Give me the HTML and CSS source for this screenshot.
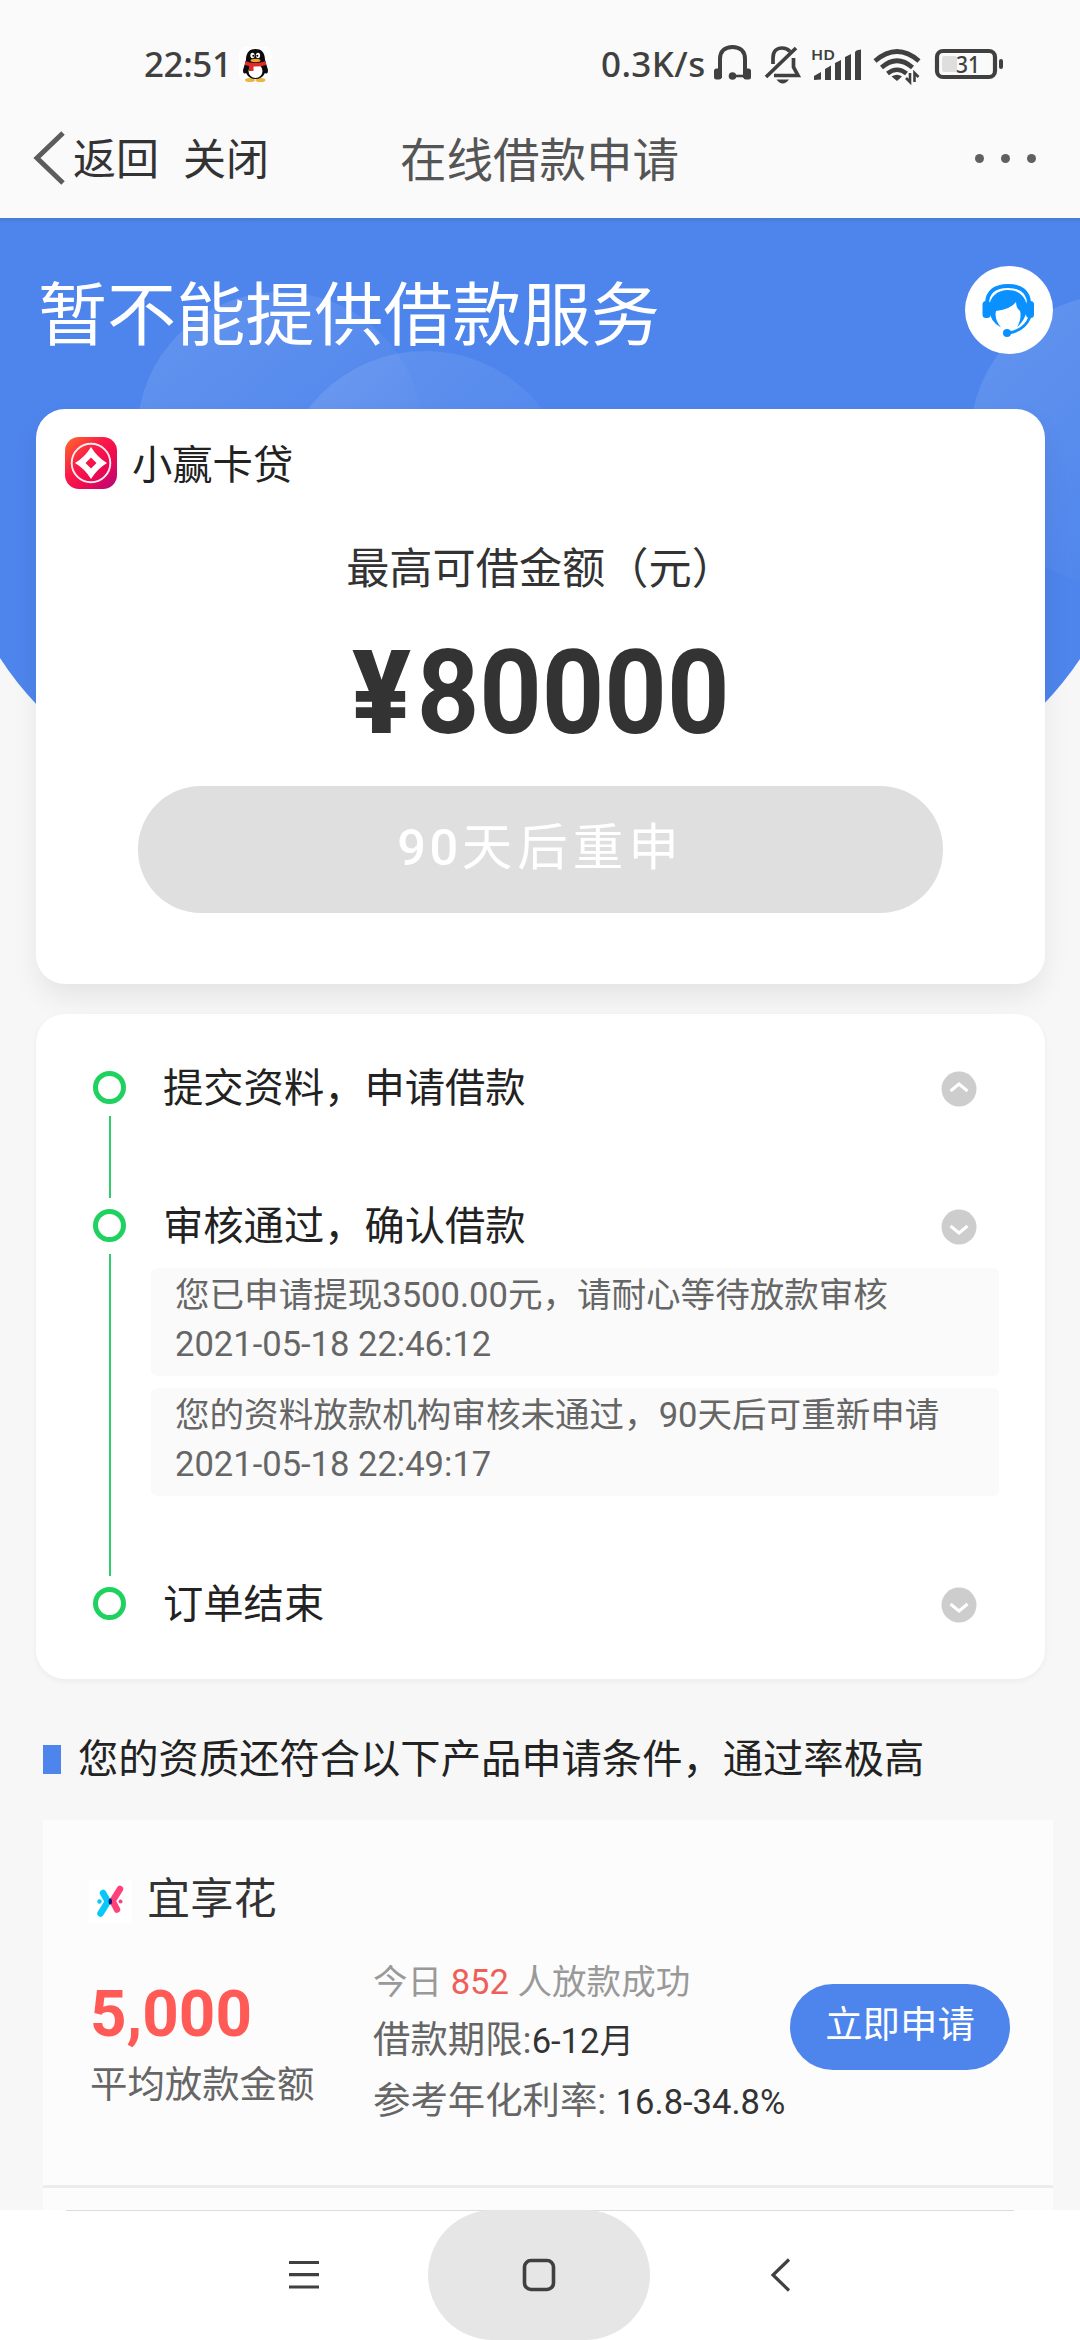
FILE: index.html
```html
<!DOCTYPE html>
<html lang="zh-CN">
<head>
<meta charset="utf-8">
<title>在线借款申请</title>
<link rel="stylesheet" href="styles.css">
</head>
<body>
<div class="screen">
  <header class="top">
    <div class="status">
      <span class="clock">22:51</span>
      <svg class="penguin" width="34" height="35" viewBox="239 47 34 35">
        <rect x="239" y="47" width="33" height="34" rx="7" fill="#fff"/>
        <ellipse cx="250" cy="80" rx="5" ry="2" fill="#e9b640"/><ellipse cx="260.500" cy="80" rx="5" ry="2" fill="#e9b640"/>
        <path d="M246 60C246 52 250 49 255.500 49S265 52 265 60L268 70Q268 75 265 73Q262 79 255.500 79T246 73Q243 75 243 70Z" fill="#0b0b0b"/>
        <ellipse cx="255.500" cy="71" rx="7" ry="7" fill="#fff"/>
        <path d="M245 61Q255 65 266 61L266 65Q260 67 253.500 66.500V71H249V66L245 65Z" fill="#e02b2b"/>
        <ellipse cx="252.500" cy="55.500" rx="2.100" ry="2.800" fill="#fff"/><ellipse cx="258" cy="55.500" rx="2.100" ry="2.800" fill="#fff"/>
        <circle cx="253.300" cy="55.700" r="1" fill="#000"/><circle cx="257.300" cy="55.700" r="1" fill="#000"/>
        <ellipse cx="255.500" cy="60.500" rx="5" ry="1.700" fill="#f0a52a"/>
      </svg>
      <span class="spacer"></span>
      <span class="speed">0.3K/s</span>
      <svg width="44" height="44" viewBox="708 42 44 44" fill="none" stroke="#404040">
        <path d="M718 78V59C718 51 723 47 730.500 47S743 51 743 59V78" stroke-width="4"/>
        <rect x="712" y="68.500" width="7.500" height="11" rx="2.500" fill="#404040" stroke="none"/>
        <rect x="741.500" y="68.500" width="7.500" height="11" rx="2.500" fill="#404040" stroke="none"/>
        <circle cx="730.500" cy="76" r="3.800" fill="#404040" stroke="none"/>
        <path d="M731 76H743" stroke-width="2.600"/>
      </svg>
      <svg width="40" height="44" viewBox="763 42 40 44" fill="none" stroke="#404040" stroke-width="3.700">
        <path d="M773 64V58C773 51 777 48 782 48Q787 48 790 51.500"/>
        <path d="M793.500 58V67L798 75.500H774"/>
        <path d="M766 77L796 48"/>
        <path d="M776.500 79.500H789Q786 83.500 782.700 83.500T776.500 79.500" fill="#404040" stroke="none"/>
      </svg>
      <svg width="54" height="44" viewBox="810 42 54 44">
        <text x="811" y="60" class="hd" textLength="24" lengthAdjust="spacingAndGlyphs">HD</text>
        <path d="M814 80V76L821 72V79.500ZM825 80V69L831 65.500V80ZM835 80V63L841 60V80ZM845 80V57L851 54V80ZM855 80V52.500Q855 50 861 49.500V80Z" fill="#404040"/>
      </svg>
      <svg class="wifi" width="50" height="44" viewBox="872 42 50 44" fill="none" stroke="#404040" stroke-width="4.600">
        <path d="M875 61Q897 42 919 61"/>
        <path d="M881.500 67.500Q897 54 912.500 67.500"/>
        <path d="M887.500 73.500Q897 66 906.500 73.500"/>
        <path d="M891.500 76.500Q897 73 902 76.500L897 81Z" fill="#404040" stroke="none"/>
        <path d="M910 73V82L906 78M914.500 82V73L918.500 77" stroke-width="2.600"/>
      </svg>
      <svg width="72" height="44" viewBox="934 42 72 44">
        <rect x="937" y="51" width="58" height="26" rx="6" fill="none" stroke="#404040" stroke-width="4.200"/>
        <rect x="942" y="56" width="15" height="16" rx="2" fill="#dedede"/>
        <rect x="999" y="59" width="4" height="10" rx="2" fill="#404040"/>
        <text x="956" y="72.500" class="level" textLength="24" lengthAdjust="spacingAndGlyphs">31</text>
      </svg>
    </div>
    <nav class="navbar">
      <div class="nav-left">
        <svg width="34" height="54" viewBox="0 0 34 54" fill="none" stroke="#5c5c5c" stroke-width="5"><path d="M30 2L4 27L30 52"/></svg>
        <span class="back">返回</span><span>关闭</span>
      </div>
      <h1 class="nav-title">在线借款申请</h1>
      <div class="more"><i></i><i></i><i></i></div>
    </nav>
  </header>

  <main class="content">
    <svg class="hero-bg" width="1080" height="500" viewBox="0 218 1080 500">
      <defs>
        <linearGradient id="orb" x1="0.200" y1="0" x2="0.750" y2="0.600"><stop offset="0" stop-color="#fff" stop-opacity=".11"/><stop offset="1" stop-color="#fff" stop-opacity=".02"/></linearGradient>
        <linearGradient id="edge" x1="0" y1="0" x2="0" y2="1"><stop offset="0" stop-color="#467ad6"/><stop offset="1" stop-color="#4e85ec"/></linearGradient>
      </defs>
      <path d="M0 218H1080V659Q1064 683 1042 706H38Q16 683 0 658Z" fill="#4e85ec"/>
      <circle cx="280" cy="435" r="143" fill="url(#orb)"/>
      <circle cx="425" cy="498" r="147" fill="url(#orb)"/>
      <circle cx="1115" cy="440" r="145" fill="url(#orb)"/>
      <rect y="218" width="1080" height="5" fill="url(#edge)"/>
    </svg>

    <div class="hero-head">
      <h2>暂不能提供借款服务</h2>
      <span class="service">
        <svg width="54" height="56" viewBox="983 282 54 56">
          <path d="M988 304C988 291 997 286 1009 286S1030 291 1030 304" fill="none" stroke="#0a91ff" stroke-width="4"/>
          <rect x="983.500" y="301" width="8" height="17" rx="3.500" fill="#0a91ff"/>
          <rect x="1027" y="301" width="8" height="17" rx="3.500" fill="#0a91ff"/>
          <path d="M990 309C990 296 999 290 1009 290S1028 296 1028 309Q1027 319 1018 327.500Q1023 318 1021 311Q1017 308 1017 302Q1012 309 997 311Q995 319 1002 327.500Q991 322 990 309" fill="#0a91ff"/>
          <path d="M1031 317Q1025 331 1009 333" fill="none" stroke="#0a91ff" stroke-width="2.800"/>
          <circle cx="1008" cy="333" r="4" fill="#0a91ff"/>
        </svg>
      </span>
    </div>

    <section class="card loan">
      <div class="brand">
        <svg width="52" height="52" viewBox="0 0 52 52">
          <defs><linearGradient id="logo" x1="0" y1="0" x2="1" y2="1"><stop offset="0" stop-color="#fd6e2a"/><stop offset=".4" stop-color="#fb1a48"/><stop offset=".65" stop-color="#ee0a50"/><stop offset="1" stop-color="#b2087c"/></linearGradient></defs>
          <rect width="52" height="52" rx="14" fill="url(#logo)"/>
          <circle cx="26" cy="26" r="19.300" fill="none" stroke="#fff" stroke-opacity=".92" stroke-width="1.900"/>
          <path d="M26 10Q29 15 33 19Q37 23 42 26Q37 29 33 33Q29 37 26 42Q23 37 19 33Q15 29 10 26Q15 23 19 19Q23 15 26 10ZM26 20.500L20.500 26L26 31.500L31.500 26Z" fill="#fff" fill-rule="evenodd"/>
        </svg>
        <span>小赢卡贷</span>
      </div>
      <p class="limit-label">最高可借金额（元）</p>
      <p class="limit"><span><b class="yen">¥</b>80000</span></p>
      <button class="retry"><b>90</b>天后重申</button>
    </section>

    <section class="card steps">
      <div class="step">
        <div class="rail"><i class="dot"></i><i class="line"></i></div>
        <div class="step-body"><div class="step-head"><span>提交资料，申请借款</span>
          <svg class="chev" viewBox="0 0 36 36"><circle cx="18" cy="18" r="17.500"/><path d="M9.500 20L18 13L26.500 20"/></svg></div></div>
      </div>
      <div class="step step-two">
        <div class="rail"><i class="dot"></i><i class="line"></i></div>
        <div class="step-body"><div class="step-head"><span>审核通过，确认借款</span>
          <svg class="chev" viewBox="0 0 36 36"><circle cx="18" cy="18" r="17.500"/><path d="M9.500 17L18 24L26.500 17"/></svg></div>
          <div class="note"><p>您已申请提现3500.00元，请耐心等待放款审核</p><p>2021-05-18 22:46:12</p></div>
          <div class="note"><p>您的资料放款机构审核未通过，90天后可重新申请</p><p>2021-05-18 22:49:17</p></div>
        </div>
      </div>
      <div class="step step-end">
        <div class="rail"><i class="dot"></i></div>
        <div class="step-body"><div class="step-head"><span>订单结束</span>
          <svg class="chev" viewBox="0 0 36 36"><circle cx="18" cy="18" r="17.500"/><path d="M9.500 17L18 24L26.500 17"/></svg></div></div>
      </div>
    </section>

    <div class="section-title"><i></i><span>您的资质还符合以下产品申请条件，通过率极高</span></div>

    <section class="products">
      <article class="product">
        <div class="product-name">
          <svg width="43" height="43" viewBox="0 0 43 43">
            <rect width="43" height="43" fill="#fff"/>
            <path d="M14 13L19 21.500L11.500 33.500" fill="none" stroke="#08c8fb" stroke-width="6.500" stroke-linecap="round" stroke-linejoin="round"/>
            <path d="M31 9L23.500 21L28 29.500" fill="none" stroke="#ff4179" stroke-width="6.500" stroke-linecap="round" stroke-linejoin="round"/>
            <ellipse cx="21.300" cy="21.500" rx="1.700" ry="3" fill="#1b1473"/>
            <circle cx="10.500" cy="21.500" r="2.200" fill="#08c8fb"/><circle cx="31.500" cy="21.500" r="2" fill="#ff4179"/>
          </svg>
          <span>宜享花</span>
        </div>
        <div class="product-row">
          <div class="amount"><p class="sum"><span>5,000</span></p><p class="sum-label">平均放款金额</p></div>
          <div class="facts">
            <p class="today">今日 <em>852</em> 人放款成功</p>
            <p class="term">借款期限:<b>6-12月</b></p>
            <p class="rate">参考年化利率: <b>16.8-34.8%</b></p>
          </div>
          <button class="apply">立即申请</button>
        </div>
      </article>
    </section>
  </main>

  <footer class="sysnav">
    <svg width="34" height="34" viewBox="0 0 34 34" stroke="#404040" stroke-width="3.200"><path d="M2 4.500H32M2 16.700H32M2 29H32"/></svg>
    <span class="home"><svg width="34" height="34" viewBox="0 0 34 34" fill="none" stroke="#404040" stroke-width="3.600"><rect x="2.500" y="2.500" width="29" height="29" rx="6.500"/></svg></span>
    <svg width="34" height="34" viewBox="0 0 34 34" fill="none" stroke="#404040" stroke-width="3.200"><path d="M25 1.500L9 17L25 32.500"/></svg>
  </footer>
</div>
</body>
</html>
```
FILE: styles.css
```css
* { box-sizing: border-box; margin: 0; padding: 0; }
body { width: 1080px; height: 2340px; overflow: hidden; background: #f7f7f7; font-family: Roboto, "Noto Sans CJK SC", sans-serif; color: #222; }
svg { display: block; flex: none; }
button { border: 0; font-family: inherit; color: #fff; display: block; }
h1, h2 { font-weight: 400; }
p, span { white-space: nowrap; }
.screen { width: 1080px; height: 2340px; display: flex; flex-direction: column; overflow: hidden; }

.top { flex: none; height: 218px; background: #fafafa; display: flex; flex-direction: column; }
.status { height: 98px; padding: 42px 74px 12px 144px; display: flex; align-items: center; color: #404040; font: 500 35px/44px "Noto Sans", sans-serif; }
.clock { width: 95px; letter-spacing: -.4px; }
.speed { width: 109px; letter-spacing: .4px; }
.spacer { flex: 1; }
.status svg + svg { margin-left: 9px; }
.status svg:nth-of-type(3) { margin-left: 9px; }
.status svg:nth-of-type(4) { margin-left: 7px; }
.status svg.wifi { margin-left: 8px; }
.status svg:last-child { margin-left: 12px; }
.hd { font: 600 15px "Noto Sans", sans-serif; fill: #404040; }
.level { font: 500 23px "Noto Sans", sans-serif; fill: #404040; }
.navbar { height: 120px; padding: 0 44px 0 33px; display: grid; grid-template-columns: 367px 1fr auto; align-items: center; }
.nav-left { display: flex; align-items: center; font-size: 43px; color: #333; line-height: 60px; }
.nav-left span { padding-top: 4px; }
.nav-left .back { margin: 0 24px 0 6px; }
.nav-title { font-size: 46.5px; line-height: 60px; padding-top: 5px; color: #555; }
.more { display: flex; justify-content: flex-end; gap: 17px; }
.more i { width: 9px; height: 9px; border-radius: 50%; background: #606060; }

.content { flex: 1; min-height: 0; overflow: hidden; position: relative; }
.hero-bg { position: absolute; left: 0; top: 0; z-index: -1; }
.hero-head { height: 191px; padding: 48px 27px 0 38px; display: flex; justify-content: space-between; align-items: flex-start; }
.hero-head h2 { font-size: 69.1px; line-height: 98px; padding-top: 2px; color: #fff; }
.service { width: 88px; height: 88px; border-radius: 50%; background: #fff; display: flex; align-items: center; justify-content: center; }

.card { margin: 0 35px 0 36px; background: #fff; border-radius: 29px; }
.loan { height: 575px; padding-top: 28px; box-shadow: 0 14px 30px -4px rgba(0,0,0,.09); }
.brand { display: flex; align-items: center; gap: 15px; height: 52px; padding-left: 29px; font-size: 40.3px; line-height: 52px; }
.brand span { padding-top: 5px; }
.limit-label { margin-top: 51px; text-align: center; font-size: 43.2px; line-height: 60px; color: #333; }
.limit { margin-top: 19px; text-align: center; font-size: 116px; line-height: 148px; font-weight: 700; color: #333; }
.limit span { display: inline-block; transform: scaleX(.94); }
.yen { margin-right: 6px; }
.retry { width: 805px; height: 127px; margin: 19px auto 0; border-radius: 63px; background: #dfdfdf; font-size: 50.5px; line-height: 124px; padding-bottom: 3px; letter-spacing: 5px; }
.retry b { font-weight: 500; letter-spacing: 3.5px; }

.steps { margin-top: 30px; height: 665px; padding: 45px 46px 0 55px; box-shadow: 0 2px 6px rgba(0,0,0,.05); }
.step { display: flex; height: 138px; }
.step-two { height: 378px; }
.step-end { height: 60px; }
.rail { width: 37px; padding-top: 12px; margin-bottom: -1px; display: flex; flex-direction: column; align-items: center; gap: 12px; }
.dot { flex: none; width: 33px; height: 33px; border: 5.5px solid #1fd15f; border-radius: 50%; }
.line { flex: 1; width: 2px; background: #2ecc6b; }
.step-body { flex: 1; padding-left: 23px; }
.step-head { height: 60px; padding: 0 22px 0 12px; display: flex; justify-content: space-between; align-items: center; font-size: 40.3px; line-height: 60px; }
.chev { width: 36px; height: 36px; fill: #cdcdcd; }
.chev path { fill: none; stroke: #fff; stroke-width: 3; }
.note { height: 108px; margin-top: 12px; padding: 3px 24px 0; border-radius: 6px; background: #fafafa; color: #666; font-size: 34.56px; line-height: 48.5px; }
.step-head + .note { margin-top: 11px; }

.section-title { display: flex; align-items: center; gap: 17px; height: 141px; padding: 20px 0 0 43px; font-size: 40.3px; line-height: 60px; }
.section-title i { width: 18px; height: 29px; background: #4e85ec; }
.section-title span { height: 60px; }
.products { width: 1010px; height: 400px; margin-left: 43px; background: #fcfcfc; }
.product { height: 368px; padding: 60px 43px 0 46px; border-bottom: 3px solid #ececec; }
.product-name { display: flex; align-items: center; gap: 15px; height: 43px; font-size: 43.2px; line-height: 43px; color: #333; }
.product-name span { padding-bottom: 4px; }
.product-row { display: flex; margin-top: 28px; }
.amount { width: 284px; padding: 25px 0 0 1px; }
.sum { height: 76px; font-size: 65.5px; line-height: 76px; font-weight: 700; color: #ff5a55; }
.sum span { display: inline-block; transform: scaleX(.973); transform-origin: left; }
.sum-label { margin-top: 8px; font-size: 37.4px; line-height: 50px; color: #666; }
.facts { width: 417px; padding-top: 3px; }
.today { font-size: 34.56px; line-height: 56px; color: #999; }
.today em { font-style: normal; color: #ef5f5a; }
.term, .rate { font-size: 37.4px; line-height: 60px; color: #666; }
.term b, .rate b { font-size: 34.56px; font-weight: 400; color: #333; }
.apply { width: 220px; height: 86px; margin-top: 33px; border-radius: 43px; background: #4e85ec; font-size: 37.4px; line-height: 82px; padding-bottom: 4px; }

.sysnav { flex: none; height: 130px; background: linear-gradient(#ddd, #ddd) 66px 0 / 948px 1px no-repeat #fff; display: flex; align-items: center; padding-left: 287px; }
.home { width: 222px; height: 130px; margin: 0 114px 0 107px; border-radius: 65px; background: #e6e6e6; display: flex; align-items: center; justify-content: center; }
```
